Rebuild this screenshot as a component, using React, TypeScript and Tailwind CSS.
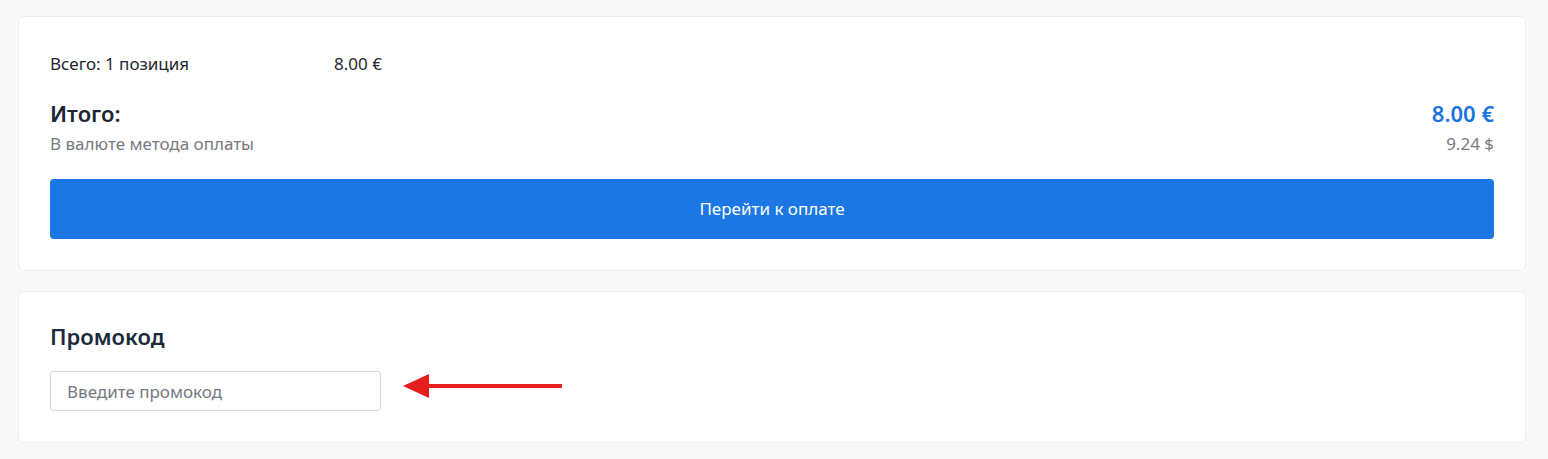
import React from "react";

const font = { fontFamily: '"Noto Sans", "Open Sans", sans-serif' };

function Arrow() {
  return (
    <svg width="160" height="26" viewBox="0 0 160 26" className="ml-[22px] mb-[10px] shrink-0">
      <polygon points="0,13 26,1 26,25" fill="#e61e1e" />
      <rect x="24" y="11" width="135" height="4" fill="#e61e1e" />
    </svg>
  );
}

export default function App() {
  return (
    <div
      className="min-h-[459px] bg-[#f8f8f8] pt-[16px] pb-[16px] pl-[18px] pr-[22px] flex flex-col gap-[20px]"
      style={font}
    >
      <section className="bg-white border border-[#ececec] rounded-[6px] px-[31px] pt-[35px] pb-[31px]">
        <div className="flex text-[17px] leading-[24px] text-[#1f2631]">
          <span className="w-[284px]">Всего: 1 позиция</span>
          <span>8.00 €</span>
        </div>
        <div className="mt-[23px] flex justify-between items-center">
          <span className="text-[22px] leading-[28px] font-semibold text-[#1c2533]">Итого:</span>
          <span className="text-[22px] leading-[28px] font-semibold text-[#1a73e0]">8.00 €</span>
        </div>
        <div className="mt-[7px] flex justify-between text-[17px] leading-[20px] text-[#777a80]">
          <span>В валюте метода оплаты</span>
          <span>9.24 $</span>
        </div>
        <button
          type="button"
          className="mt-[25px] w-full h-[60px] rounded-[4px] bg-[#1a77e3] text-white text-[17px]"
        >
          Перейти к оплате
        </button>
      </section>

      <section className="bg-white border border-[#ececec] rounded-[6px] px-[31px] pt-[30px] pb-[31px]">
        <h2 className="text-[22px] leading-[28px] font-semibold text-[#1b2a3b]">Промокод</h2>
        <div className="mt-[21px] flex items-center">
          <input
            type="text"
            placeholder="Введите промокод"
            className="w-[331px] h-[40px] border border-[#d9d9d9] rounded-[3px] px-[16px] text-[17px] text-[#1f2631] placeholder:text-[#747880] outline-none"
            style={font}
          />
          <Arrow />
        </div>
      </section>
    </div>
  );
}
